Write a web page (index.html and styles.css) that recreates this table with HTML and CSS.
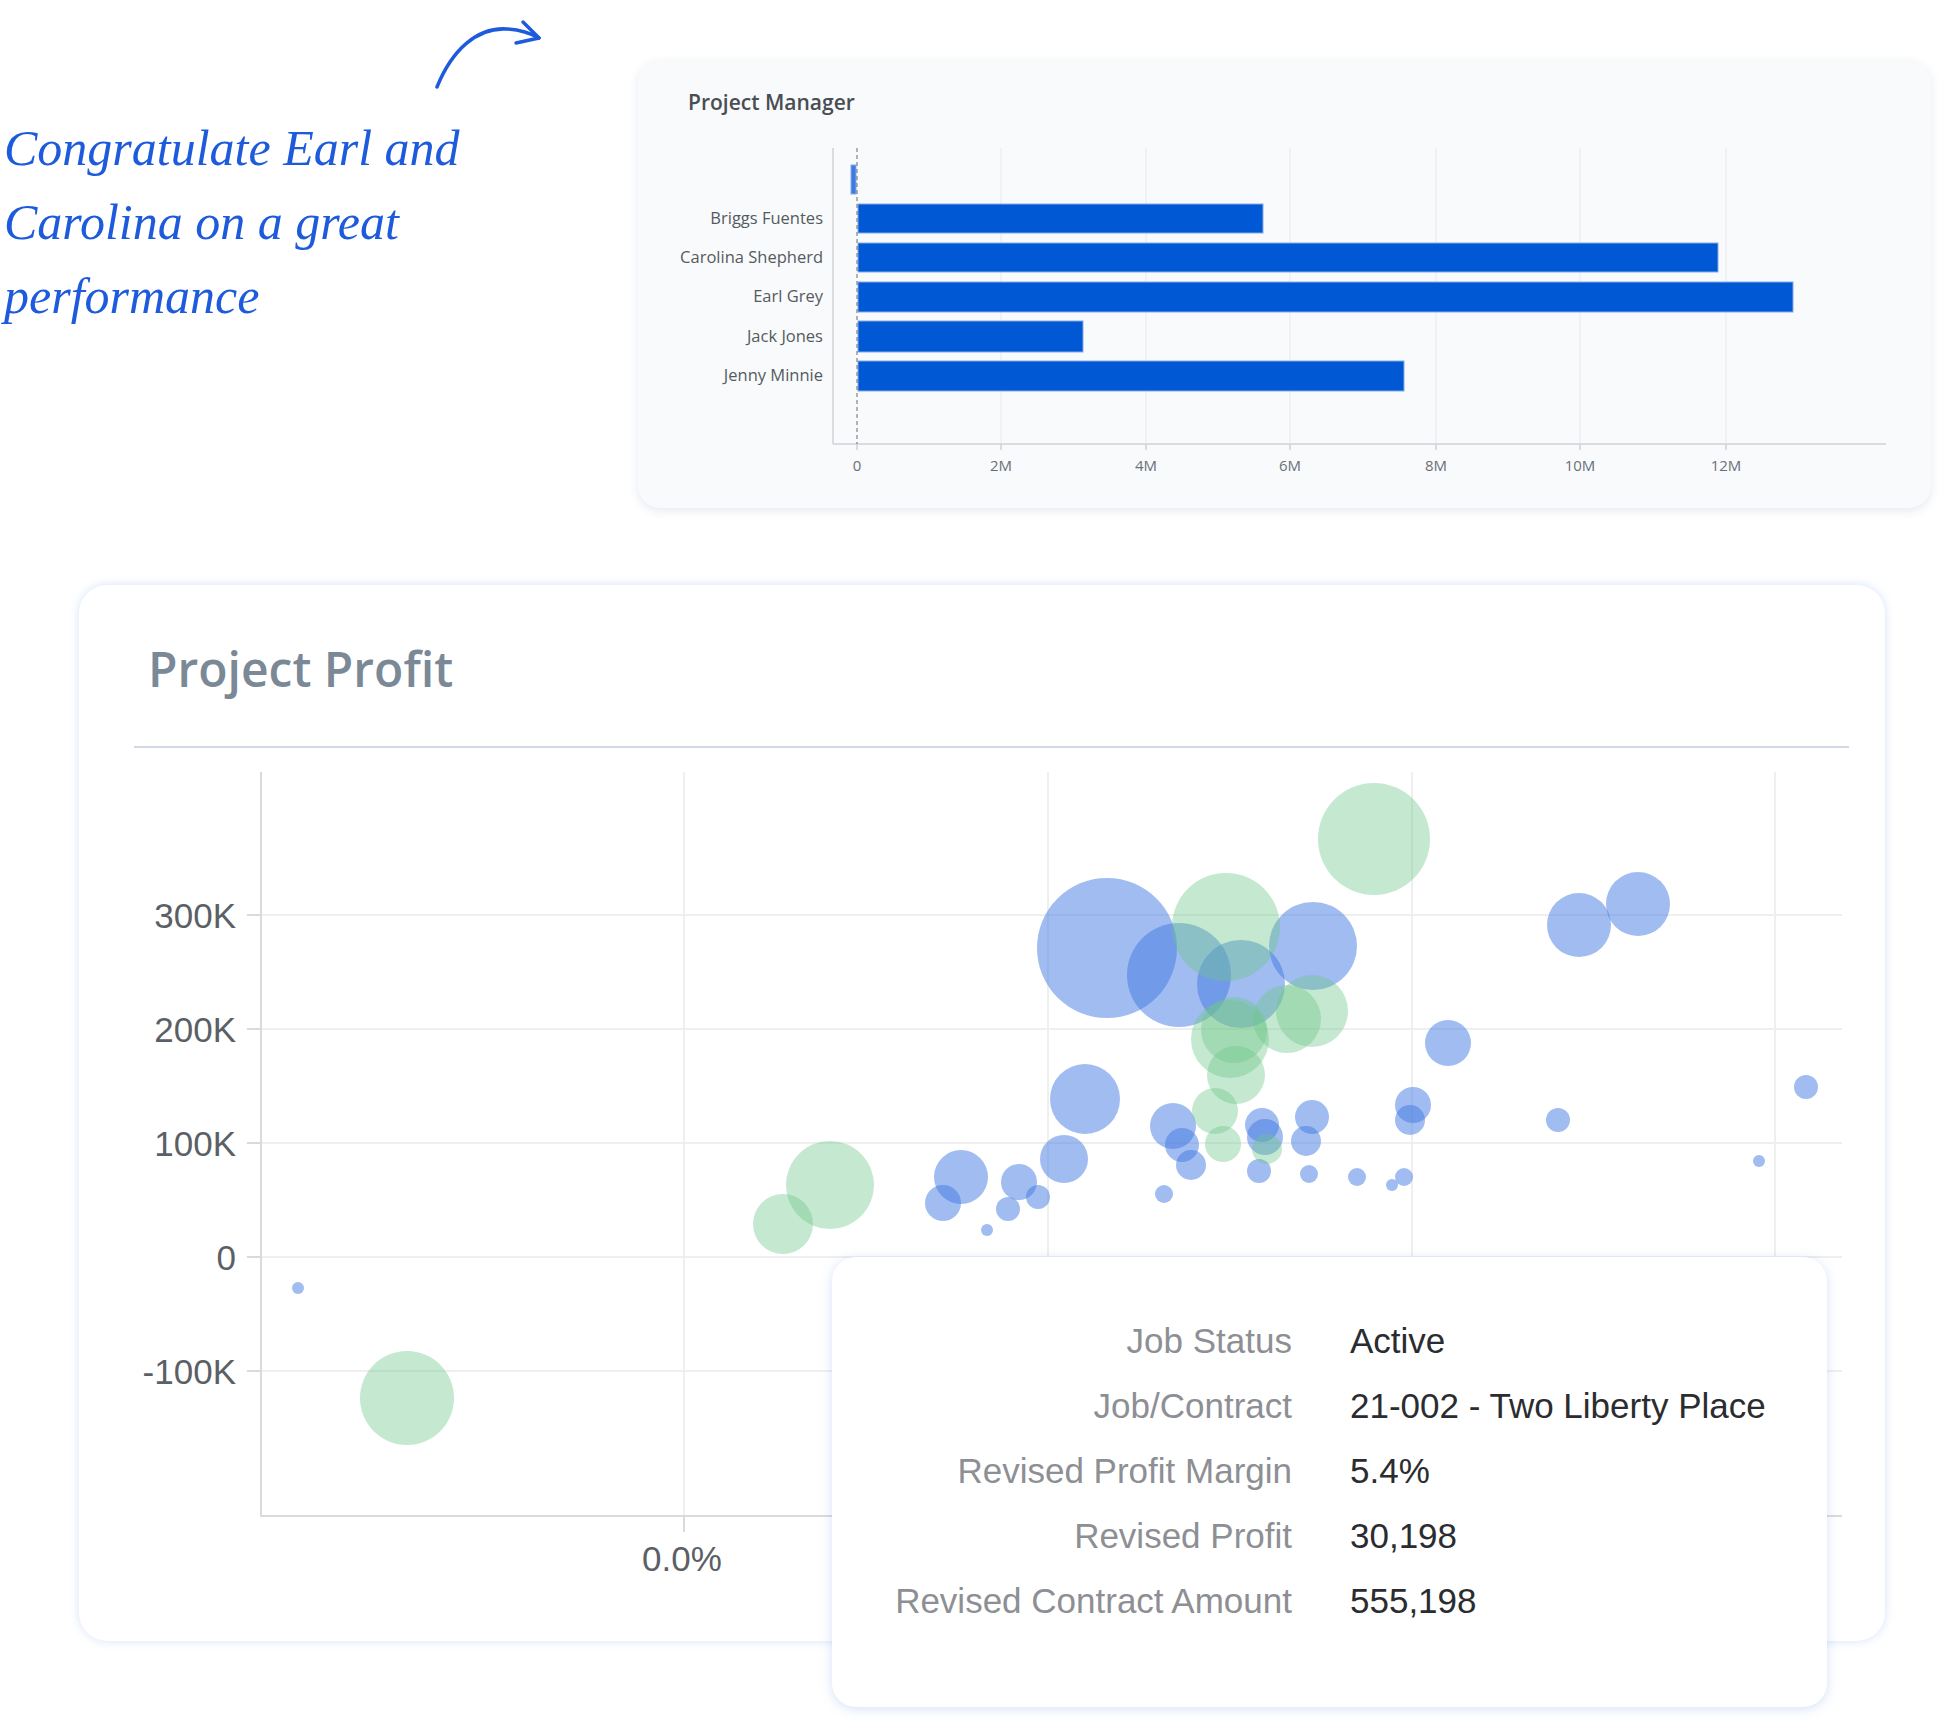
FILE: index.html
```html
<!DOCTYPE html>
<html lang="en">
<head>
<meta charset="utf-8">
<title>Project dashboard</title>
<link rel="stylesheet" href="styles.css">
</head>
<body>
<div class="top">
  <div class="note">
    <svg class="arrow" width="112" height="72" viewBox="432 18 112 72" aria-hidden="true">
      <path d="M437,87 C452,50 477,27 507,29 C521,30 532,34 539,38" />
      <path d="M523,22 L539,38 L516,43" />
    </svg>
    <p class="note-text">Congratulate Earl and<br>Carolina on a great<br>performance</p>
  </div>

  <section class="pm-card">
    <h2 class="pm-title">Project Manager</h2>
    <svg class="pm-chart" width="1293" height="394" viewBox="638 114 1293 394">
      <g class="grid">
        <line x1="1001" y1="148" x2="1001" y2="444"/>
        <line x1="1146" y1="148" x2="1146" y2="444"/>
        <line x1="1290" y1="148" x2="1290" y2="444"/>
        <line x1="1436" y1="148" x2="1436" y2="444"/>
        <line x1="1580" y1="148" x2="1580" y2="444"/>
        <line x1="1726" y1="148" x2="1726" y2="444"/>
      </g>
      <g class="axis">
        <line x1="833" y1="148" x2="833" y2="444"/>
        <line x1="833" y1="444" x2="1886" y2="444"/>
        <line x1="857" y1="444" x2="857" y2="450"/>
        <line x1="1001" y1="444" x2="1001" y2="450"/>
        <line x1="1146" y1="444" x2="1146" y2="450"/>
        <line x1="1290" y1="444" x2="1290" y2="450"/>
        <line x1="1436" y1="444" x2="1436" y2="450"/>
        <line x1="1580" y1="444" x2="1580" y2="450"/>
        <line x1="1726" y1="444" x2="1726" y2="450"/>
      </g>
      <g class="bars">
        <rect class="bar-neg" x="851" y="165" width="5" height="29"/>
        <rect x="858" y="204" width="405" height="29"/>
        <rect x="858" y="243" width="860" height="29"/>
        <rect x="858" y="282" width="935" height="30"/>
        <rect x="858" y="321" width="225" height="31"/>
        <rect x="858" y="361" width="546" height="30"/>
      </g>
      <line class="zero" x1="857" y1="148" x2="857" y2="444"/>
      <g class="cat">
        <text x="823" y="224">Briggs Fuentes</text>
        <text x="823" y="263">Carolina Shepherd</text>
        <text x="823" y="302">Earl Grey</text>
        <text x="823" y="342">Jack Jones</text>
        <text x="823" y="381">Jenny Minnie</text>
      </g>
      <g class="ticks">
        <text x="857" y="471">0</text>
        <text x="1001" y="471">2M</text>
        <text x="1146" y="471">4M</text>
        <text x="1290" y="471">6M</text>
        <text x="1436" y="471">8M</text>
        <text x="1580" y="471">10M</text>
        <text x="1726" y="471">12M</text>
      </g>
    </svg>
  </section>
</div>

<section class="profit-card">
  <h2 class="profit-title">Project Profit</h2>
  <div class="divider"></div>
  <svg class="profit-chart" width="1806" height="893" viewBox="79 748 1806 893">
    <g class="sgrid">
      <line x1="261" y1="915" x2="1842" y2="915"/>
      <line x1="261" y1="1029" x2="1842" y2="1029"/>
      <line x1="261" y1="1143" x2="1842" y2="1143"/>
      <line x1="261" y1="1257" x2="1842" y2="1257"/>
      <line x1="261" y1="1371" x2="1842" y2="1371"/>
      <line x1="684" y1="772" x2="684" y2="1516"/>
      <line x1="1048" y1="772" x2="1048" y2="1516"/>
      <line x1="1412" y1="772" x2="1412" y2="1516"/>
      <line x1="1775" y1="772" x2="1775" y2="1516"/>
    </g>
    <g class="saxis">
      <line x1="261" y1="772" x2="261" y2="1517"/>
      <line x1="260" y1="1516" x2="1842" y2="1516"/>
      <line x1="247" y1="915" x2="261" y2="915"/>
      <line x1="247" y1="1029" x2="261" y2="1029"/>
      <line x1="247" y1="1143" x2="261" y2="1143"/>
      <line x1="247" y1="1257" x2="261" y2="1257"/>
      <line x1="247" y1="1371" x2="261" y2="1371"/>
      <line x1="684" y1="1516" x2="684" y2="1532"/>
      <line x1="1048" y1="1516" x2="1048" y2="1532"/>
      <line x1="1412" y1="1516" x2="1412" y2="1532"/>
      <line x1="1775" y1="1516" x2="1775" y2="1532"/>
    </g>
    <g class="ylab">
      <text x="236" y="928">300K</text>
      <text x="236" y="1042">200K</text>
      <text x="236" y="1156">100K</text>
      <text x="236" y="1270">0</text>
      <text x="236" y="1384">-100K</text>
    </g>
    <g class="xlab">
      <text x="682" y="1571">0.0%</text>
    </g>
    <g class="bub-blue">
      <circle cx="1107" cy="948" r="70"/>
      <circle cx="1179" cy="975" r="52"/>
      <circle cx="1313" cy="946" r="44"/>
      <circle cx="1241" cy="984" r="44"/>
      <circle cx="1448" cy="1043" r="23"/>
      <circle cx="1085" cy="1099" r="35"/>
      <circle cx="1064" cy="1159" r="24"/>
      <circle cx="1019" cy="1182" r="18"/>
      <circle cx="1038" cy="1197" r="12"/>
      <circle cx="1008" cy="1209" r="12"/>
      <circle cx="961" cy="1177" r="27"/>
      <circle cx="943" cy="1203" r="18"/>
      <circle cx="987" cy="1230" r="6"/>
      <circle cx="1173" cy="1126" r="23"/>
      <circle cx="1182" cy="1145" r="17"/>
      <circle cx="1191" cy="1165" r="15"/>
      <circle cx="1164" cy="1194" r="9"/>
      <circle cx="1262" cy="1125" r="17"/>
      <circle cx="1265" cy="1137" r="18"/>
      <circle cx="1259" cy="1171" r="12"/>
      <circle cx="1312" cy="1117" r="17"/>
      <circle cx="1306" cy="1141" r="15"/>
      <circle cx="1309" cy="1174" r="9"/>
      <circle cx="1357" cy="1177" r="9"/>
      <circle cx="1392" cy="1185" r="6"/>
      <circle cx="1404" cy="1177" r="9"/>
      <circle cx="1413" cy="1105" r="18"/>
      <circle cx="1410" cy="1120" r="15"/>
      <circle cx="1579" cy="925" r="32"/>
      <circle cx="1638" cy="904" r="32"/>
      <circle cx="1558" cy="1120" r="12"/>
      <circle cx="1806" cy="1087" r="12"/>
      <circle cx="1759" cy="1161" r="6"/>
      <circle cx="298" cy="1288" r="6"/>
    </g>
    <g class="bub-green">
      <circle cx="1374" cy="839" r="56"/>
      <circle cx="1226" cy="927" r="54"/>
      <circle cx="1287" cy="1019" r="34"/>
      <circle cx="1312" cy="1011" r="36"/>
      <circle cx="1230" cy="1039" r="39"/>
      <circle cx="1234" cy="1030" r="33"/>
      <circle cx="1236" cy="1075" r="29"/>
      <circle cx="1215" cy="1111" r="23"/>
      <circle cx="1223" cy="1144" r="18"/>
      <circle cx="1267" cy="1149" r="15"/>
      <circle cx="830" cy="1185" r="44"/>
      <circle cx="783" cy="1224" r="30"/>
      <circle cx="407" cy="1398" r="47"/>
    </g>
  </svg>

  <div class="tooltip">
    <span class="tt-label">Job Status</span><span class="tt-value">Active</span>
    <span class="tt-label">Job/Contract</span><span class="tt-value">21-002 - Two Liberty Place</span>
    <span class="tt-label">Revised Profit Margin</span><span class="tt-value">5.4%</span>
    <span class="tt-label">Revised Profit</span><span class="tt-value">30,198</span>
    <span class="tt-label">Revised Contract Amount</span><span class="tt-value">555,198</span>
  </div>
</section>
</body>
</html>
```

FILE: styles.css
```css
* { box-sizing: border-box; }

html, body {
  margin: 0;
  padding: 0;
  background: #ffffff;
}

body {
  width: 1942px;
  min-height: 1726px;
  font-family: "Open Sans", "Liberation Sans", sans-serif;
  overflow: hidden;
}

.top {
  display: flex;
  align-items: flex-start;
}

/* handwritten note */
.note {
  width: 638px;
  padding-top: 18px;
  padding-left: 4px;
  display: flex;
  flex-direction: column;
}

.arrow {
  display: block;
  margin-left: 428px;
}

.arrow path {
  fill: none;
  stroke: #1d5bdc;
  stroke-width: 3.5;
  stroke-linecap: round;
  stroke-linejoin: round;
}

.note-text {
  margin: 21px 0 0 0;
  font-family: "Liberation Serif", "DejaVu Serif", serif;
  font-style: italic;
  font-size: 50px;
  line-height: 74px;
  color: #1d5bdc;
  white-space: nowrap;
}

/* project manager card */
.pm-card {
  width: 1293px;
  height: 448px;
  margin-top: 60px;
  padding-top: 30px;
  background: #f8fafc;
  border-radius: 22px;
  box-shadow: 0 3px 10px rgba(40, 70, 130, 0.12);
  overflow: hidden;
}

.pm-title {
  margin: 0 0 0 50px;
  font-family: "Open Sans", sans-serif;
  font-weight: 600;
  font-size: 21px;
  line-height: 24px;
  color: #4a4d52;
}

.pm-chart {
  display: block;
}

.pm-chart .grid line {
  stroke: #e8e9ec;
  stroke-width: 1;
}

.pm-chart .axis line {
  stroke: #cfd3d9;
  stroke-width: 1.5;
}

.pm-chart .bars rect {
  fill: #0058d4;
  stroke: #85a9ea;
  stroke-width: 1;
}

.pm-chart .bars .bar-neg {
  fill: #3f7ae0;
}

.pm-chart .zero {
  stroke: #666a70;
  stroke-width: 1;
  stroke-dasharray: 4 3;
}

.pm-chart .cat text {
  font-family: "Open Sans", sans-serif;
  font-size: 16.5px;
  fill: #555a60;
  text-anchor: end;
}

.pm-chart .ticks text {
  font-family: "Open Sans", sans-serif;
  font-size: 15px;
  fill: #6b7077;
  text-anchor: middle;
}

/* project profit card */
.profit-card {
  position: relative;
  width: 1806px;
  height: 1056px;
  margin-top: 77px;
  margin-left: 79px;
  padding-top: 54px;
  background: #ffffff;
  border-radius: 28px;
  box-shadow: 0 0 10px rgba(70, 120, 220, 0.22);
}

.profit-title {
  margin: 0 0 0 69px;
  font-family: "Open Sans", sans-serif;
  font-weight: 600;
  font-size: 48px;
  line-height: 60px;
  color: #7b8896;
}

.divider {
  height: 2px;
  margin: 47px 36px 0 55px;
  background: #cfd8e4;
}

.profit-chart {
  display: block;
}

.sgrid line {
  stroke: #efefef;
  stroke-width: 2;
}

.saxis line {
  stroke: #dadada;
  stroke-width: 2;
}

.ylab text {
  font-family: "Liberation Sans", Arial, sans-serif;
  font-size: 35px;
  fill: #5b5f66;
  text-anchor: end;
}

.xlab text {
  font-family: "Liberation Sans", Arial, sans-serif;
  font-size: 35px;
  fill: #5b5f66;
  text-anchor: middle;
}

.bub-blue circle {
  fill: rgb(65, 121, 225);
  fill-opacity: 0.5;
}

.bub-green circle {
  fill: rgb(110, 197, 137);
  fill-opacity: 0.4;
}

/* tooltip overlay */
.tooltip {
  position: absolute;
  left: 753px;
  top: 672px;
  width: 995px;
  height: 450px;
  padding-top: 51px;
  display: grid;
  grid-template-columns: 460px 1fr;
  column-gap: 58px;
  align-content: start;
  background: #ffffff;
  border-radius: 24px;
  box-shadow: 0 2px 12px rgba(70, 120, 220, 0.22);
  font-family: "Liberation Sans", Arial, sans-serif;
  font-size: 35px;
  line-height: 65px;
}

.tt-label {
  text-align: right;
  color: #8d8f94;
  white-space: nowrap;
}

.tt-value {
  color: #2a2c30;
  white-space: nowrap;
}
```
